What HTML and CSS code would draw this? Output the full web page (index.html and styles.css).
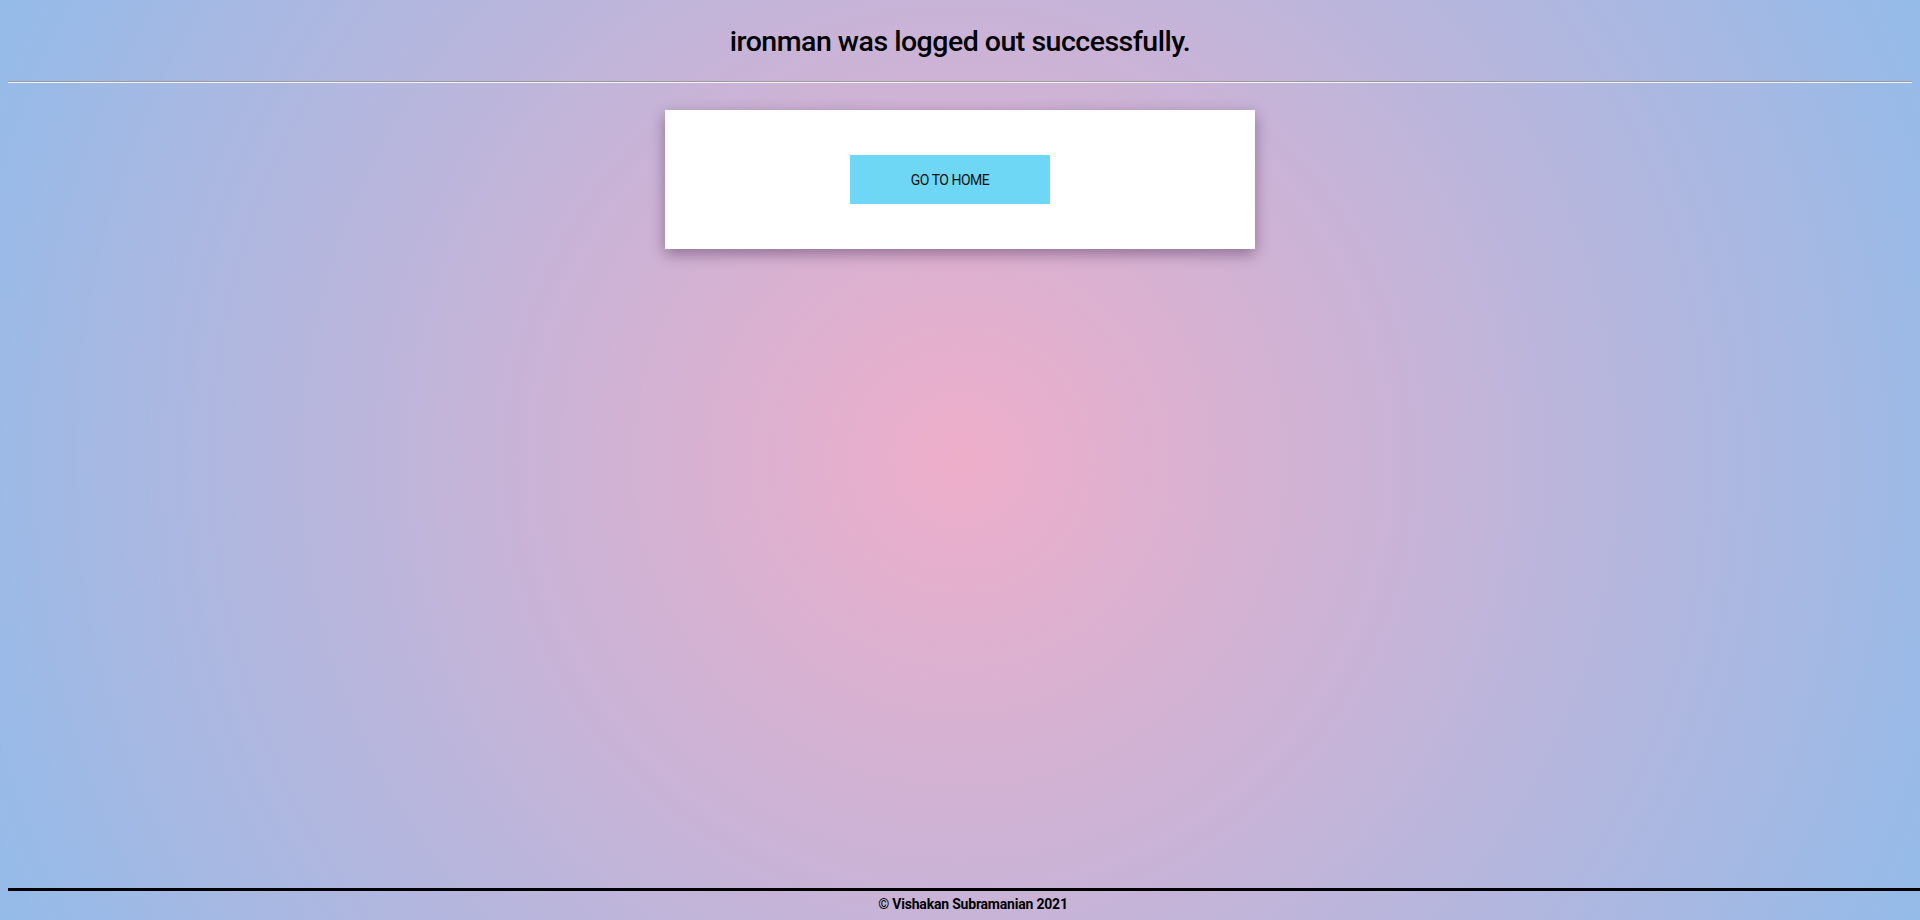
FILE: index.html
```html
<!DOCTYPE html>
<html lang="en">
<head>
<meta charset="utf-8">
<title>Logged out</title>
<link rel="stylesheet" href="styles.css">
</head>
<body>
<div class="page">
  <main class="content">
    <h1 class="title">ironman was logged out successfully.</h1>
    <hr class="rule">
    <section class="card">
      <a class="btn" href="#">GO TO HOME</a>
    </section>
  </main>
  <footer class="footer">© Vishakan Subramanian 2021</footer>
</div>
</body>
</html>
```

FILE: styles.css
```css
html, body {
  height: 100%;
}
body {
  margin: 0;
  background: radial-gradient(circle, rgba(238,174,202,1) 0%, rgba(148,187,233,1) 100%);
  font-family: Roboto, "Noto Sans", sans-serif;
  color: #000;
  overflow: hidden;
}
.page {
  display: flex;
  flex-direction: column;
  height: 920px;
}
.content {
  flex: 1;
  display: flex;
  flex-direction: column;
  padding: 0 8px;
}
.title {
  margin: 22px 0 0;
  height: 39px;
  line-height: 39px;
  font-size: 28.5px;
  font-weight: 500;
  text-align: center;
  letter-spacing: -0.5px;
}
.rule {
  margin: 20px 0 0;
  border: 0;
  border-top: 1px solid #9a9a9a;
  border-bottom: 1px solid #f4f4f4;
  height: 0;
}
.card {
  align-self: center;
  width: 590px;
  box-sizing: border-box;
  margin-top: 27px;
  background: #fff;
  box-shadow: 0 5px 14px rgba(60, 30, 70, 0.45);
  display: flex;
  justify-content: center;
  padding: 45px 20px 45px 0;
}
.btn {
  display: flex;
  align-items: center;
  justify-content: center;
  width: 200px;
  height: 49px;
  background: #6dd7f5;
  color: #111;
  text-decoration: none;
  font-size: 14px;
  letter-spacing: -0.5px;
}
.footer {
  margin-left: 8px;
  border-top: 3px solid #000;
  height: 32px;
  box-sizing: border-box;
  padding: 5px 0 0 18px;
  text-align: center;
  font-size: 14px;
  font-weight: 700;
  letter-spacing: -0.2px;
  line-height: 16px;
}
```
